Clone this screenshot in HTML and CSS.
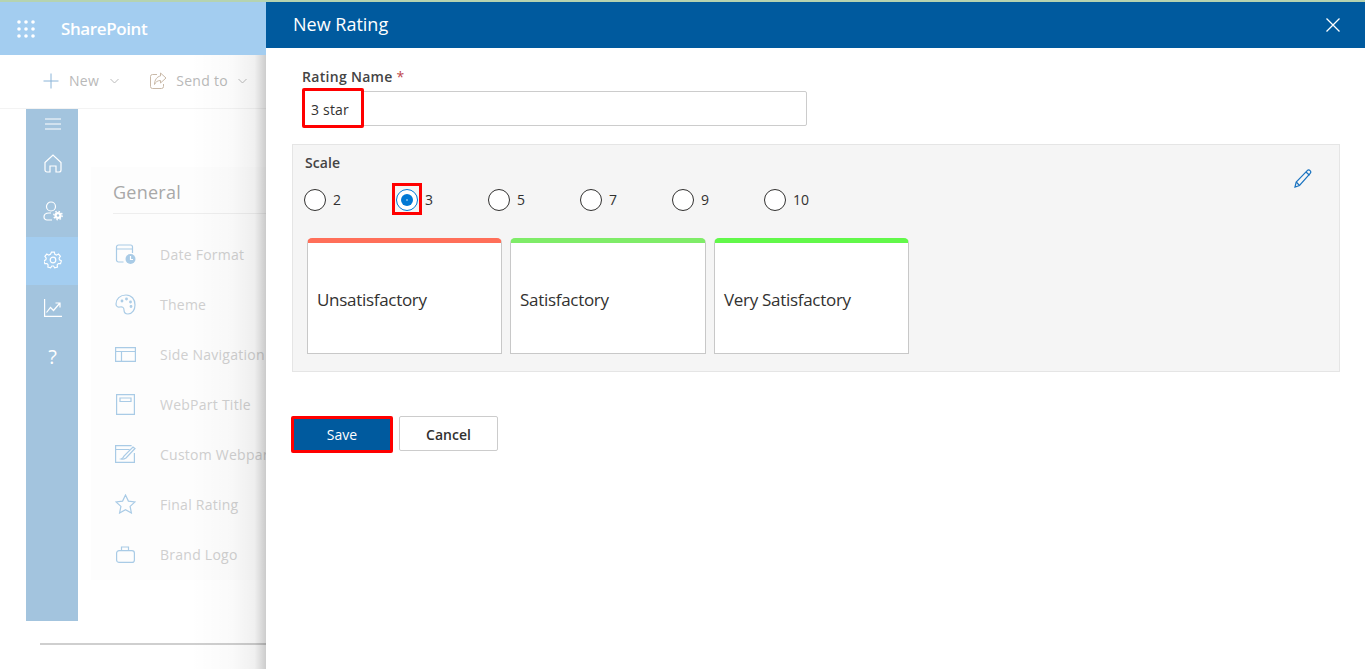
FILE: index.html
```html
<!DOCTYPE html>
<html>
  <head>
    <title>New Rating</title>
    <link rel="stylesheet" href="styles.css">
  </head>
  <body>
    <div class="page">
      <div class="suite-bar">
        <svg class="waffle" width="18" height="18" viewBox="0 0 18 18">
          <g fill="#fff">
            <circle cx="2" cy="2" r="1.8"/><circle cx="9" cy="2" r="1.8"/><circle cx="16" cy="2" r="1.8"/>
            <circle cx="2" cy="9" r="1.8"/><circle cx="9" cy="9" r="1.8"/><circle cx="16" cy="9" r="1.8"/>
            <circle cx="2" cy="16" r="1.8"/><circle cx="9" cy="16" r="1.8"/><circle cx="16" cy="16" r="1.8"/>
          </g>
        </svg>
        <span class="brand">SharePoint</span>
      </div>

      <div class="command-bar">
        <div class="command command-new">
          <svg width="16" height="16" viewBox="0 0 16 16"><path d="M8 0.5v15M0.5 8h15" stroke="#8ab4d8" fill="none"/></svg>
          <span>New</span>
          <svg class="caret" width="9" height="6" viewBox="0 0 9 6"><path d="M0.5 1l4 4 4-4" stroke="#bbb" fill="none"/></svg>
        </div>
        <div class="command">
          <svg width="17" height="17" viewBox="0 0 17 17" fill="none" stroke="#c9b9a8">
            <path d="M7 2.500H2.500a2 2 0 0 0-2 2v10a2 2 0 0 0 2 2h9a2 2 0 0 0 2-2V12"/>
            <path d="M10.500 1l5.500 5-5.500 5V8.500C7.500 8.500 5.500 10 4.500 12.500 4.500 8 7 4.500 10.500 4z"/>
          </svg>
          <span>Send to</span>
          <svg class="caret" width="9" height="6" viewBox="0 0 9 6"><path d="M0.5 1l4 4 4-4" stroke="#bbb" fill="none"/></svg>
        </div>
      </div>

      <div class="content">
        <nav class="side-nav">
          <div class="side-item side-menu">
            <svg width="16" height="12" viewBox="0 0 16 12"><path d="M0 1h16M0 6h16M0 11h16" stroke="#fff" fill="none"/></svg>
          </div>
          <div class="side-item side-high">
            <svg width="18" height="19" viewBox="0 0 18 19" fill="none" stroke="#fff" stroke-width="1.200">
              <path d="M1 8.500L9 1l8 7.500V16a2 2 0 0 1-2 2h-3v-6H6v6H3a2 2 0 0 1-2-2z"/>
            </svg>
          </div>
          <div class="side-item side-high">
            <svg width="20" height="20" viewBox="0 0 20 20" fill="none" stroke="#fff" stroke-width="1.200">
              <circle cx="8" cy="5.500" r="4.500"/>
              <path d="M9 19H4a3 3 0 0 1-3-3c0-2.500 2-4 5-4h2"/>
              <circle cx="15" cy="14.500" r="3.600" fill="#fff" stroke="none"/>
              <circle cx="15" cy="14.500" r="4.200" stroke-width="1.400" stroke-dasharray="1.500 1.800"/>
              <circle cx="15" cy="14.500" r="1.200" fill="#a3c4de" stroke="none"/>
            </svg>
          </div>
          <div class="side-item side-active">
            <svg width="18" height="18" viewBox="0 0 18 18" fill="none" stroke="#fff" stroke-width="1.200">
              <circle cx="9" cy="9" r="2.800"/>
              <path d="M7.500 1h3l.5 2.300 1.700.8 2.100-1.100 2 2.300-1.400 1.900.4 1.800 2 1-.9 2.900-2.300-.1-1.200 1.400.3 2.300-2.900.9-1.200-2h-1.800l-1.200 2-2.900-.9.3-2.300-1.200-1.400-2.300.1-.9-2.900 2-1 .4-1.800L.6 5.300l2-2.300 2.100 1.100 1.700-.8z" transform="translate(.3 .2) scale(.96)"/>
            </svg>
          </div>
          <div class="side-item">
            <svg width="18" height="18" viewBox="0 0 18 18" fill="none" stroke="#fff" stroke-width="1.200">
              <path d="M.6 0v17.400H18"/>
              <path d="M2.500 13.500l4-5 3 3 6-7M11.500 4h4.500v4.500"/>
            </svg>
          </div>
          <div class="side-item side-help">?</div>
        </nav>

        <section class="general">
          <h2 class="general-title">General</h2>
          <div class="general-row">
            <svg width="20" height="20" viewBox="0 0 20 20" fill="none" stroke="#a9cbe6" stroke-width="1.200">
              <path d="M8 18H3a2 2 0 0 1-2-2V3a2 2 0 0 1 2-2h12a2 2 0 0 1 2 2v6M1 5h16"/>
              <circle cx="15" cy="15" r="5" fill="#a9cbe6" stroke="none"/>
              <path d="M15 12v3.500h2.500" stroke="#fff"/>
            </svg>
            <span>Date Format</span>
          </div>
          <div class="general-row">
            <svg width="21" height="21" viewBox="0 0 21 21" fill="none" stroke="#a9cbe6" stroke-width="1.200">
              <path d="M11 1C5 1 1 5 1 10c0 2.500 2 3.500 4 3 2.500-.5 4 .5 4 3 0 2.500 1.500 4 4 4 4.500 0 7-4.500 7-9C20 5 16.500 1 11 1z"/>
              <circle cx="7" cy="7" r=".8"/><circle cx="11.500" cy="5" r=".8"/><circle cx="15.500" cy="8" r=".8"/><circle cx="16" cy="12.500" r=".8"/>
            </svg>
            <span>Theme</span>
          </div>
          <div class="general-row">
            <svg width="21" height="15" viewBox="0 0 21 15" fill="none" stroke="#a9cbe6" stroke-width="1.200">
              <path d="M.6.600h19.800v13.800H.6zM.6 4.500h19.800M6.500 4.500v9.900"/>
            </svg>
            <span>Side Navigation</span>
          </div>
          <div class="general-row">
            <svg width="19" height="21" viewBox="0 0 19 21" fill="none" stroke="#a9cbe6" stroke-width="1.200">
              <path d="M.6.600h17.800v19.800H.6zM4 4h11v3.500H4z"/>
            </svg>
            <span>WebPart Title</span>
          </div>
          <div class="general-row">
            <svg width="21" height="18" viewBox="0 0 21 18" fill="none" stroke="#a9cbe6" stroke-width="1.200">
              <path d="M19.400 8v9.400H.6V.6h16M.6 4.500h14"/>
              <path d="M6 14c2-.5 2.500-1.500 3-3l9-9 2 1.500-9 9.500c-1.500 1-3.500 1.500-5 1z"/>
            </svg>
            <span>Custom Webpart</span>
          </div>
          <div class="general-row">
            <svg width="21" height="20" viewBox="0 0 21 20" fill="none" stroke="#a9cbe6" stroke-width="1.200">
              <path d="M10.500 1l2.900 6.100 6.600.8-4.900 4.500 1.300 6.600-5.900-3.300-5.900 3.300 1.300-6.600L1 7.900l6.600-.8z"/>
            </svg>
            <span>Final Rating</span>
          </div>
          <div class="general-row">
            <svg width="19" height="17" viewBox="0 0 19 17" fill="none" stroke="#a9cbe6" stroke-width="1.200">
              <rect x=".6" y="4.600" width="17.800" height="11.800" rx="2.500"/>
              <path d="M5.500 4.500V1h7v3.500"/>
            </svg>
            <span>Brand Logo</span>
          </div>
        </section>
      </div>

      <div class="page-rule"></div>
      <div class="page-fade"></div>

      <aside class="panel">
        <header class="panel-header">
          <span class="panel-title">New Rating</span>
          <svg width="14" height="14" viewBox="0 0 14 14"><path d="M.5.500l13 13M13.500.500l-13 13" stroke="#fff" stroke-width="1.300" fill="none"/></svg>
        </header>
        <div class="panel-body">
          <label class="field-label">Rating Name <span class="required">*</span></label>
          <div class="text-field">
            <span class="text-value">3 star</span>
          </div>

          <div class="scale">
            <div class="scale-label">Scale</div>
            <svg class="edit" width="18" height="19" viewBox="0 0 18 19" fill="none" stroke="#1a73c0" stroke-width="1.200">
              <path d="M1 18l1.200-5L13 1.800c1-1 2.300-1 3.100-.2.800.8.800 2.100-.1 3L5.500 16.500z"/>
              <path d="M2.200 13l3.300 3.500M12 3l3.500 3.300"/>
            </svg>
            <div class="radios">
              <div class="radio-item"><span class="radio"></span><span>2</span></div>
              <div class="radio-item"><span class="radio radio-on"></span><span>3</span></div>
              <div class="radio-item"><span class="radio"></span><span>5</span></div>
              <div class="radio-item"><span class="radio"></span><span>7</span></div>
              <div class="radio-item"><span class="radio"></span><span>9</span></div>
              <div class="radio-item"><span class="radio"></span><span>10</span></div>
            </div>
            <div class="cards">
              <div class="card card-red">Unsatisfactory</div>
              <div class="card card-light">Satisfactory</div>
              <div class="card card-green">Very Satisfactory</div>
            </div>
          </div>

          <div class="actions">
            <button class="btn btn-save">Save</button>
            <button class="btn btn-cancel">Cancel</button>
          </div>
        </div>
      </aside>
    </div>
  </body>
</html>
```

FILE: styles.css
```css
html, body {
  margin: 0;
  height: 100%;
  overflow: hidden;
}

body {
  font-family: "Open Sans", "Noto Sans", sans-serif;
  background-color: #fff;
}

.page {
  position: relative;
  height: 669px;
  border-top: 2px solid #b5d3b0;
  box-sizing: border-box;
}

.suite-bar {
  height: 53px;
  background-color: #a3cdf0;
  display: flex;
  align-items: center;
  padding-left: 17px;
  gap: 26px;
}

.brand {
  color: #fff;
  font-size: 17px;
  font-weight: 600;
  letter-spacing: -0.4px;
}

.command-bar {
  height: 51px;
  border-bottom: 1px solid #f3f3f3;
  display: flex;
  align-items: center;
  padding: 0 0 2px 43px;
  gap: 31px;
  color: #b9b9b9;
  font-size: 14px;
  letter-spacing: 0.3px;
}

.command {
  display: flex;
  align-items: center;
  gap: 9px;
}

.command-new {
  gap: 10px;
}

.caret {
  margin-left: 1px;
}

.content {
  display: flex;
  padding-left: 26px;
}

.side-nav {
  width: 52px;
  height: 512px;
  background-color: #a3c4de;
  flex-shrink: 0;
}

.side-item {
  height: 48px;
  padding-left: 1px;
  display: flex;
  align-items: center;
  justify-content: center;
  color: #fff;
}

.side-item svg {
  margin-bottom: 2px;
}

.side-item.side-high svg {
  margin-bottom: 4px;
}

.side-menu {
  height: 32px;
}

.side-active {
  background-color: #a3cdf0;
}

.side-help {
  font-size: 20px;
  padding-bottom: 2px;
  height: 46px;
}

.general {
  margin: 58px 0 0 13px;
  width: 260px;
  height: 413px;
  background-color: #fdfdfd;
  padding: 13px 0 0 22px;
  box-sizing: border-box;
}

.general-title {
  margin: 0;
  padding-bottom: 8px;
  font-size: 18px;
  font-weight: 400;
  color: #a8a8a8;
  border-bottom: 1px solid #eee;
  line-height: 25px;
  letter-spacing: 0.25px;
}

.general-row {
  height: 50px;
  display: flex;
  align-items: center;
  color: #cfcfcf;
  font-size: 14px;
  letter-spacing: 0.25px;
  white-space: nowrap;
  position: relative;
  top: 15px;
}

.general-row svg {
  width: 21px;
  margin-left: 2px;
  margin-right: 24px;
  flex-shrink: 0;
}

.page-rule {
  height: 2px;
  background-color: #cfcfcf;
  margin: 22px 0 0 40px;
}

/* shadow the open panel throws on the page behind it */
.page-fade {
  position: absolute;
  top: 53px;
  bottom: 0;
  left: 190px;
  width: 76px;
  background: linear-gradient(to right, rgba(0,0,0,0), rgba(0,0,0,0.02) 55%, rgba(0,0,0,0.06) 85%, rgba(0,0,0,0.2));
}

.panel {
  position: absolute;
  top: 0;
  bottom: 0;
  left: 266px;
  right: 0;
  background-color: #fff;
  color: #323130;
}

.panel-header {
  height: 44px;
  padding: 0 25px 2px 27px;
  background-color: #005a9e;
  color: #fff;
  display: flex;
  align-items: center;
  justify-content: space-between;
}

.panel-header svg {
  margin-top: 2px;
}

.panel-title {
  font-size: 18px;
}

.panel-body {
  padding: 19px 25px 0 26px;
}

.field-label {
  display: block;
  margin-left: 10px;
  font-size: 14px;
  font-weight: 600;
  line-height: 20px;
  letter-spacing: 0.3px;
  color: #444;
}

.required {
  color: #c0474c;
  font-weight: 400;
}

.text-field {
  position: relative;
  margin: 4px 0 0 10px;
  width: 505px;
  height: 35px;
  border: 1px solid #ccc;
  border-radius: 2px;
  box-sizing: border-box;
}

/* red highlight box drawn over the field */
.text-value {
  position: absolute;
  left: -1px;
  top: -4px;
  width: 62px;
  height: 40px;
  border: 3px solid #f00;
  border-radius: 2px;
  background-color: #fff;
  box-sizing: border-box;
  padding-left: 6px;
  font-size: 14px;
  letter-spacing: 0.2px;
  line-height: 38px;
}

.scale {
  position: relative;
  margin-top: 18px;
  height: 228px;
  background-color: #f5f5f5;
  border: 1px solid #e5e5e5;
  box-sizing: border-box;
  padding: 8px 12px 0 12px;
}

.scale-label {
  font-size: 14px;
  font-weight: 600;
  line-height: 20px;
  letter-spacing: 0.1px;
  color: #444;
}

.edit {
  position: absolute;
  top: 24px;
  right: 27px;
}

.radios {
  display: flex;
  margin: 16px 0 0 -1px;
}

.radio-item {
  width: 92px;
  display: flex;
  align-items: center;
  gap: 7px;
  font-size: 14px;
  line-height: 22px;
}

.radio {
  width: 22px;
  height: 22px;
  border: 1px solid #323130;
  border-radius: 50%;
  background-color: #fff;
  box-sizing: border-box;
  position: relative;
}

.radio-on {
  border-color: #0078d4;
}

.radio-on::before {
  content: "";
  position: absolute;
  left: 4px;
  top: 4px;
  width: 12px;
  height: 12px;
  border-radius: 50%;
  background: radial-gradient(circle, #8fc3ea 0.5px, #0078d4 1.2px);
}

/* red highlight box drawn around the selected radio */
.radio-on::after {
  content: "";
  position: absolute;
  left: -5px;
  top: -7px;
  width: 30px;
  height: 32px;
  border: 3px solid #f00;
  box-sizing: border-box;
}

.cards {
  display: flex;
  gap: 8px;
  margin: 27px 0 0 2px;
}

.card {
  width: 196px;
  height: 116px;
  background-color: #fff;
  border: 1px solid #c8c8c8;
  border-top: 5px solid;
  border-radius: 5px 5px 0 0;
  box-sizing: border-box;
  padding: 2px 0 0 9px;
  display: flex;
  align-items: center;
  font-size: 17px;
  letter-spacing: -0.3px;
}

.card-red {
  border-top-color: #ff6f59;
  width: 195px;
}

.card-light {
  border-top-color: #7fec68;
}

.card-green {
  border-top-color: #62f84a;
  width: 195px;
}

.actions {
  display: flex;
  gap: 6px;
  align-items: flex-start;
  margin: 44px 0 0 -1px;
}

.btn {
  font-family: "Open Sans", "Noto Sans", sans-serif;
  font-size: 14px;
  border-radius: 2px;
  box-sizing: border-box;
}

.btn-save {
  width: 102px;
  height: 37px;
  background-color: #005a9e;
  color: #fff;
  border: 3px solid #f00;
  font-weight: 400;
}

.btn-cancel {
  width: 99px;
  height: 35px;
  padding-top: 3px;
  background-color: #fff;
  color: #323130;
  border: 1px solid #ccc;
  font-weight: 600;
}
```
